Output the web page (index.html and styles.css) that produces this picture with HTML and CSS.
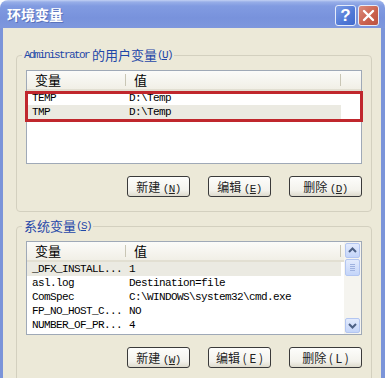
FILE: index.html
```html
<!DOCTYPE html>
<html lang="zh">
<head>
    <meta charset="UTF-8">
    <title>环境变量</title>
    <link rel="stylesheet" href="styles.css">
</head>
<body>
    <div class="window">
        <div class="titlebar">
            <span class="title">环境变量</span>
            <div class="caption-buttons">
                <span class="cap-btn help">?</span>
                <span class="cap-btn close">
                    <svg width="19" height="19" viewBox="0 0 19 19"><path d="M5 5 L14 14 M14 5 L5 14" stroke="#fff" stroke-width="2.4" stroke-linecap="round"/></svg>
                </span>
            </div>
        </div>

        <div class="client">
            <fieldset class="group">
                <legend><span class="mono">Administrator</span> 的用户变量<span class="mono">(<u>U</u>)</span></legend>
                <div class="listview">
                    <div class="lv-main">
                        <div class="lv-header">
                            <span class="col-name">变量</span>
                            <span class="col-value">值</span>
                        </div>
                        <div class="lv-row"><span class="col-name">TEMP</span><span class="col-value">D:\Temp</span></div>
                        <div class="lv-row selected"><span class="col-name">TMP</span><span class="col-value">D:\Temp</span></div>
                    </div>
                    <div class="mark"></div>
                </div>
                <div class="button-row">
                    <button class="btn">新建 <span class="mono">(<u>N</u>)</span></button>
                    <button class="btn">编辑 <span class="mono">(<u>E</u>)</span></button>
                    <button class="btn wide">删除 <span class="mono">(<u>D</u>)</span></button>
                </div>
            </fieldset>

            <fieldset class="group second">
                <legend>系统变量<span class="mono">(<u>S</u>)</span></legend>
                <div class="listview">
                    <div class="lv-main">
                        <div class="lv-header">
                            <span class="col-name">变量</span>
                            <span class="col-value">值</span>
                        </div>
                        <div class="lv-row selected"><span class="col-name">_DFX_INSTALL...</span><span class="col-value">1</span></div>
                        <div class="lv-row"><span class="col-name">asl.log</span><span class="col-value">Destination=file</span></div>
                        <div class="lv-row"><span class="col-name">ComSpec</span><span class="col-value">C:\WINDOWS\system32\cmd.exe</span></div>
                        <div class="lv-row"><span class="col-name">FP_NO_HOST_C...</span><span class="col-value">NO</span></div>
                        <div class="lv-row"><span class="col-name">NUMBER_OF_PR...</span><span class="col-value">4</span></div>
                        <div class="lv-row"><span class="col-name">OS</span><span class="col-value">Windows_NT</span></div>
                    </div>
                    <div class="scrollbar">
                        <span class="sb-btn">
                            <svg width="13" height="13" viewBox="0 0 13 13"><path d="M3 8 L6.5 4.5 L10 8" fill="none" stroke="#4d6185" stroke-width="2"/></svg>
                        </span>
                        <span class="sb-btn thumb">
                            <svg width="13" height="15" viewBox="0 0 13 15"><path d="M4 4.5 H9 M4 6.5 H9 M4 8.5 H9 M4 10.5 H9" stroke="#9fb2df" stroke-width="1"/></svg>
                        </span>
                        <span class="sb-btn down">
                            <svg width="13" height="13" viewBox="0 0 13 13"><path d="M3 5 L6.5 8.5 L10 5" fill="none" stroke="#4d6185" stroke-width="2"/></svg>
                        </span>
                    </div>
                </div>
                <div class="button-row">
                    <button class="btn">新建 <span class="mono">(<u>W</u>)</span></button>
                    <button class="btn">编辑 ( E )</button>
                    <button class="btn wide">删除 ( L )</button>
                </div>
            </fieldset>
        </div>
    </div>
</body>
</html>
```

FILE: styles.css
```css
body {
    margin: 0;
    background: #fff;
    font-family: "Noto Sans CJK SC", sans-serif;
}

.window {
    width: 385px;
    height: 378px;
    display: flex;
    flex-direction: column;
    border-radius: 8px 8px 0 0;
    overflow: hidden;
}

.titlebar {
    height: 28px;
    flex: none;
    display: flex;
    justify-content: space-between;
    align-items: flex-start;
    padding: 0 6px 0 7px;
    background: linear-gradient(#c3d1f3 0, #97aee8 2px, #819be1 6px, #7892dc 18px, #7e97dd 28px);
}

.title {
    color: #fff;
    font-size: 14px;
    font-weight: bold;
    line-height: 28px;
    text-shadow: 1px 1px 0 #5a72bb;
}

.caption-buttons {
    display: flex;
    gap: 2px;
    padding-top: 5px;
}

.cap-btn {
    width: 19px;
    height: 19px;
    border: 1px solid #e6ecfa;
    border-radius: 3px;
    display: flex;
    align-items: center;
    justify-content: center;
    color: #fff;
    font-family: "Liberation Sans", sans-serif;
    font-weight: bold;
    font-size: 17px;
}

.help {
    background: linear-gradient(135deg, #7d9de6, #4f78d6 60%, #4169cc);
}

.close {
    background: linear-gradient(135deg, #dc8c7c, #c9604c 60%, #bb5241);
}

.client {
    flex: 1;
    background: #ece9d8;
    border-left: 3px solid #7b94d9;
    border-right: 4px solid #7b94d9;
    padding: 19px 9px 0 13px;
}

.mono {
    font-family: "Liberation Mono", monospace;
}

.group {
    margin: 0;
    min-width: 0;
    border: 1px solid #d3d0bf;
    border-radius: 4px;
    padding: 7px 9px 14px 9px;
}

.group.second {
    margin-top: 6px;
}

.group legend {
    height: 16px;
    margin-left: -4px;
    padding: 0 2px;
    font-size: 13px;
    line-height: 16px;
    color: #1f47a8;
}

.group legend .mono {
    font-size: 11px;
    letter-spacing: -1.6px;
    vertical-align: top;
}

.listview {
    position: relative;
    height: 92px;
    display: flex;
    border: 1px solid #9fa9b7;
    background: #fff;
}

.lv-main {
    flex: 1;
    overflow: hidden;
}

.lv-header {
    height: 18px;
    display: flex;
    background: linear-gradient(#fbfbf9, #f1efe6);
    border-bottom: 2px solid #e2dfd2;
    font-size: 13px;
    line-height: 18px;
}

.lv-header span {
    padding-left: 8px;
    background: linear-gradient(#c9c6b5, #c9c6b5) no-repeat right 3px / 1px 12px;
}

.col-name {
    width: 99px;
    flex: none;
    box-sizing: border-box;
    padding-left: 5px;
    white-space: nowrap;
}

.col-value {
    width: 215px;
    flex: none;
    box-sizing: border-box;
    padding-left: 3px;
    white-space: nowrap;
}

.lv-row {
    width: 314px;
    height: 14px;
    display: flex;
    font-family: "Liberation Mono", monospace;
    font-size: 11px;
    letter-spacing: -0.6px;
    line-height: 14px;
    color: #000;
}

.lv-row.selected {
    background: #ebeae2;
}

.mark {
    position: absolute;
    left: -2px;
    top: 20px;
    width: 332px;
    height: 25px;
    border: 3px solid #c0272d;
}

.scrollbar {
    width: 17px;
    flex: none;
    display: flex;
    flex-direction: column;
    align-items: center;
    background: #f5f4ef;
    padding: 1px 0;
    gap: 1px;
}

.sb-btn {
    width: 13px;
    height: 13px;
    border: 1px solid #b3c6f1;
    border-radius: 2px;
    background: linear-gradient(#e3ebfd, #c4d5f9);
    display: flex;
}

.sb-btn.thumb {
    height: 15px;
}

.sb-btn.down {
    margin-top: auto;
}

.button-row {
    display: flex;
    justify-content: flex-end;
    gap: 18px;
    margin-top: 12px;
}

.btn {
    width: 63px;
    height: 21px;
    padding: 0;
    border: 1px solid #3a3a3a;
    border-radius: 3px;
    background: linear-gradient(#fdfdfb, #f3f2ec 70%, #dedbcd);
    font-family: "Noto Sans CJK SC", sans-serif;
    font-size: 12px;
    line-height: 19px;
    color: #222;
}

.btn.wide {
    width: 73px;
}

.btn .mono {
    font-size: 11px;
    letter-spacing: -0.6px;
}
```
